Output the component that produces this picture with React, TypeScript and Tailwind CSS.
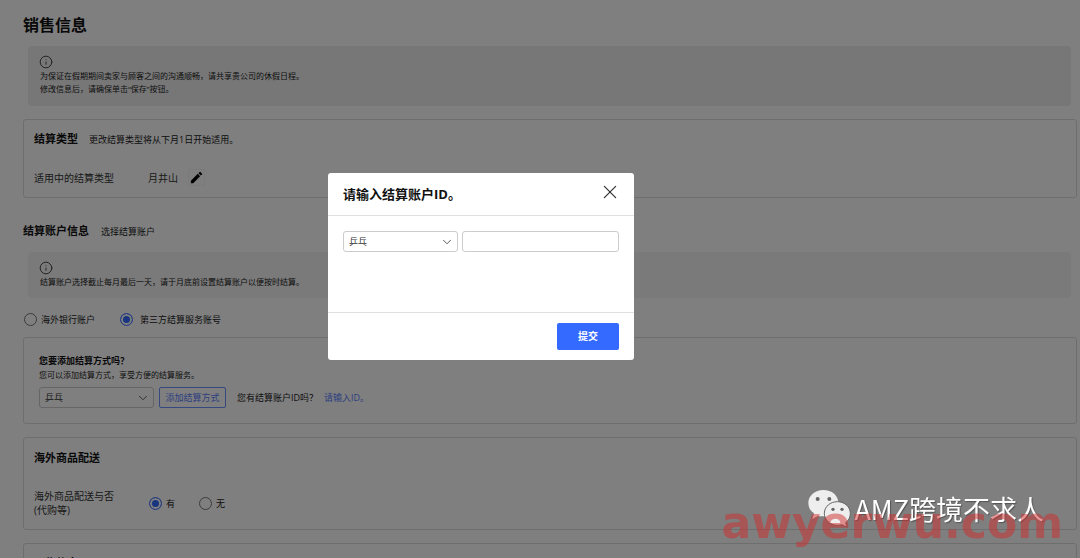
import React, { useState } from 'react';
import { ChevronDown, Info, X } from 'lucide-react';
import { MdEdit } from 'react-icons/md';

const services = ['乒乓'];

function Notice({ className, lines }: { className: string; lines: string[] }) {
  return (
    <div className={`ml-[5px] mr-[6px] rounded px-3 pt-[9px] text-[8px] leading-[13px] text-[#222] ${className}`}>
      <Info className="-ml-px size-[14px] text-[#333]" strokeWidth={1.5} aria-hidden="true" />
      <div>
        {lines.map((line) => (
          <p key={line}>{line}</p>
        ))}
      </div>
    </div>
  );
}

function Card({ className, children }: { className: string; children: React.ReactNode }) {
  return <section className={`rounded-[3px] border border-[#dcdcdc] ${className}`}>{children}</section>;
}

function ServiceSelect({ label }: { label: string }) {
  return (
    <div className="relative w-[115px] shrink-0">
      <select
        aria-label={label}
        className="block h-[21px] w-full appearance-none rounded-[3px] border border-[#ccc] bg-white pl-[5px] text-[9px] leading-[13px] text-[#333]"
      >
        {services.map((name) => (
          <option key={name}>{name}</option>
        ))}
      </select>
      <ChevronDown
        className="pointer-events-none absolute top-[4px] right-[4px] size-[14px] text-[#444]"
        strokeWidth={1.5}
        aria-hidden="true"
      />
    </div>
  );
}

function Radio({ name, label, defaultChecked, className }: { name: string; label: string; defaultChecked?: boolean; className: string }) {
  return (
    <label className={`flex items-center text-[9px] leading-[13px] text-[#222] ${className}`}>
      <input
        type="radio"
        name={name}
        defaultChecked={defaultChecked}
        className="size-[13px] appearance-none rounded-full border border-[#777] bg-white checked:border-[#4a7bff] checked:bg-[#346aff] checked:shadow-[inset_0_0_0_2px_white]"
      />
      {label}
    </label>
  );
}

function AccountDialog({ onClose }: { onClose: () => void }) {
  return (
    <div className="fixed inset-0 flex items-start justify-center bg-black/50 pt-[173px] pr-[118px]">
      <div role="dialog" aria-modal="true" aria-labelledby="dialog-title" className="w-[306px] rounded-[3px] bg-white">
        <header className="flex h-[43px] items-center justify-between border-b border-[#e0e0e0] pr-[15px] pl-[15px]">
          <h2 id="dialog-title" className="text-[13px] leading-5 font-bold text-[#111]">
            请输入结算账户ID。
          </h2>
          <button type="button" aria-label="关闭" onClick={onClose} className="mb-1">
            <X className="size-[18px] scale-125 text-[#333]" strokeWidth={1.25} />
          </button>
        </header>
        <div className="flex h-[96px] gap-[4px] px-[15px] pt-[15px]">
          <ServiceSelect label="结算服务" />
          <input
            type="text"
            aria-label="结算账户ID"
            className="h-[21px] min-w-0 flex-1 rounded-[3px] border border-[#ccc] px-[5px] text-[9px]"
          />
        </div>
        <footer className="flex justify-end border-t border-[#e0e0e0] px-[15px] py-[10px]">
          <button type="button" className="h-[27px] w-[62px] rounded-[2px] bg-[#346aff] text-[10px] font-bold text-white">
            提交
          </button>
        </footer>
      </div>
    </div>
  );
}

function ChatLogo() {
  return (
    <svg className="h-[39px] w-[43px]" viewBox="327 57 129 117" aria-hidden="true">
      <path
        fill="#eee"
        d="M373 60c-25 0-45 17-45 39 0 13 6 24 17 31l-5 17 18-10c5 2 10 2 16 2 25 0 44-17 44-40s-20-39-45-39z"
      />
      <path
        fill="#eee"
        stroke="#666"
        strokeWidth="3"
        d="M415 95c-21 0-39 15-39 35s18 36 39 36c5 0 10-1 14-2l15 8-4-14c9-7 14-16 14-28 0-20-18-35-39-35z"
      />
      <g fill="#666">
        <circle cx="356" cy="87" r="6" />
        <circle cx="391" cy="87" r="6" />
        <circle cx="402" cy="118" r="5" />
        <circle cx="429" cy="118" r="5" />
      </g>
    </svg>
  );
}

export default function App() {
  const [open, setOpen] = useState(true);

  return (
    <div className="h-screen overflow-hidden bg-white font-['Open_Sans','Noto_Sans_CJK_SC',sans-serif] text-[#111]">
      <main className="pt-[13px] pr-[3px] pl-[23px]">
        <h1 className="text-[16px] leading-6 font-bold">销售信息</h1>
        <Notice
          className="mt-[9px] h-[60px] bg-[#eee]"
          lines={['为保证在假期期间卖家与顾客之间的沟通顺畅，请共享贵公司的休假日程。', '修改信息后，请确保单击“保存”按钮。']}
        />

        <Card className="mt-[13px] px-[10px] pt-[11px] pb-[11px]">
          <div className="flex items-center gap-[11px]">
            <h2 className="text-[11px] leading-4 font-bold">结算类型</h2>
            <p className="text-[9px] leading-[13px] text-[#222]">更改结算类型将从下月1日开始适用。</p>
          </div>
          <div className="mt-[22px] flex items-center text-[10px] leading-[14px] text-[#333]">
            <span className="w-[114px]">适用中的结算类型</span>
            <span>月井山</span>
            <button
              type="button"
              aria-label="编辑"
              className="ml-[10px] flex size-[17px] items-center justify-center border border-[#f4f4f4] text-black"
            >
              <MdEdit className="size-[15px] shrink-0" />
            </button>
          </div>
        </Card>

        <div className="mt-[25px] flex items-center gap-[12px]">
          <h2 className="text-[11px] leading-4 font-bold">结算账户信息</h2>
          <p className="text-[9px] leading-[13px] text-[#222]">选择结算账户</p>
        </div>
        <Notice
          className="mt-[13px] h-[46px] bg-[#f4f4f4]"
          lines={['结算账户选择截止每月最后一天，请于月底前设置结算账户以便按时结算。']}
        />

        <div className="mt-[15px] ml-px flex gap-[25px]">
          <Radio name="account" label="海外银行账户" className="gap-1" />
          <Radio name="account" label="第三方结算服务账号" defaultChecked className="gap-[7px]" />
        </div>

        <Card className="mt-[11px] px-[15px] pt-4 pb-[15px]">
          <h3 className="text-[9px] leading-[14px] font-bold">您要添加结算方式吗？</h3>
          <p className="text-[8px] leading-[14px] text-[#222]">您可以添加结算方式，享受方便的结算服务。</p>
          <div className="mt-[5px] flex items-center text-[9px] leading-[13px]">
            <ServiceSelect label="结算方式" />
            <button
              type="button"
              className="ml-[5px] h-[21px] w-[67px] rounded-[2px] border border-[#6a90ff] text-[#5a80ff]"
            >
              添加结算方式
            </button>
            <span className="ml-[11px] text-[#222]">您有结算账户ID吗？</span>
            <a href="#account-id" className="ml-[6px] text-[#5a80ff]" onClick={() => setOpen(true)}>
              请输入ID。
            </a>
          </div>
        </Card>

        <Card className="mt-[13px] px-[10px] pt-3 pb-3">
          <h2 className="text-[11px] leading-4 font-bold">海外商品配送</h2>
          <div className="mt-[23px] flex items-center text-[10px] leading-[14px] text-[#333]">
            <p className="w-[115px]">
              海外商品配送与否
              <br />
              (代购等)
            </p>
            <Radio name="shipping" label="有" defaultChecked className="w-[50px] gap-1" />
            <Radio name="shipping" label="无" className="gap-1" />
          </div>
        </Card>

        <Card className="mt-[13px] px-[10px] pt-[11px] pb-3">
          <h2 className="text-[11px] leading-4 font-bold">工作信息</h2>
        </Card>
      </main>

      {open && <AccountDialog onClose={() => setOpen(false)} />}

      <div className="pointer-events-none fixed right-[36px] bottom-[30px] flex items-center gap-[3px]">
        <ChatLogo />
        <span className="font-['Noto_Sans_CJK_SC',sans-serif] text-[27px] leading-[39px] text-white [text-shadow:1px_1px_1px_#555]">
          AMZ跨境不求人
        </span>
      </div>
      <div className="pointer-events-none fixed right-[17px] bottom-[9px] font-['DejaVu_Sans',sans-serif] text-[44px] leading-[52px] font-bold text-[#d02b2b]/50">
        awyerwu.com
      </div>
    </div>
  );
}
